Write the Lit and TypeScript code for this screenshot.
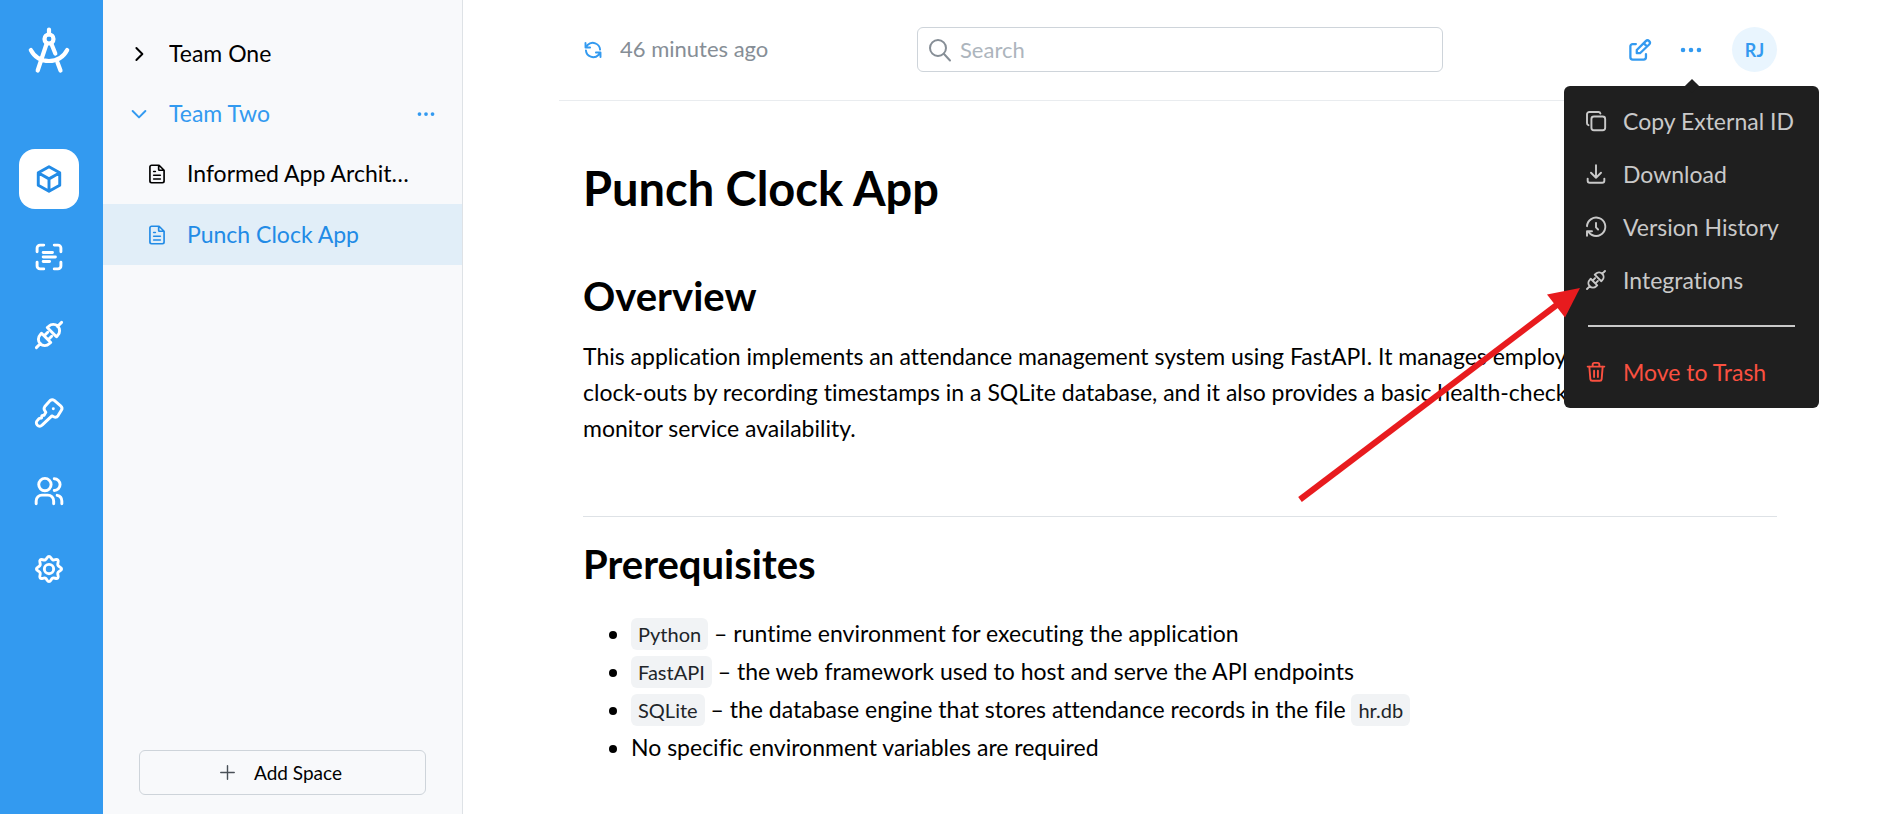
import { LitElement, html, css, svg, TemplateResult, SVGTemplateResult } from "lit";
import { customElement, property } from "lit/decorators.js";

/* Stroke icons on a 24-unit grid. */
const icons: Record<string, SVGTemplateResult> = {
  cube: svg`<path d="M12 1.500l9.200 5.200v10.600L12 22.500l-9.200-5.200V6.700zM12 11.900l9.200-5.200M12 11.900v10.600M12 11.900L2.800 6.700"/>`,
  scan: svg`<path d="M1.800 7.500V4.300a2.500 2.500 0 0 1 2.500-2.500h3.200M16.500 1.800h3.200a2.500 2.500 0 0 1 2.500 2.500v3.200M22.200 16.500v3.200a2.500 2.500 0 0 1-2.500 2.500h-3.200M7.500 22.200H4.300a2.500 2.500 0 0 1-2.500-2.500v-3.200M7 8.200h8M7 12h10.500M7 15.800h5.500"/>`,
  plug: svg`<path d="M1.200 22.800l3.500-3.500M22.800 1.200l-3.500 3.500M5.600 10.500l7.900 7.900-1.300 1.100a5 5 0 0 1-7.700-7.700zM18.400 13.500l-7.900-7.900 1.300-1.100a5 5 0 0 1 7.700 7.700zM7.900 12.700l3-3M11.300 16.100l3-3"/>`,
  key: svg`<path d="M13 1.300a3 3 0 0 1 3.500-.1l5.500 4.600a3 3 0 0 1 .6 3.900l-2.800 4.500a3 3 0 0 1-3.800 1l-1.500-.7-8.200 7.700a2.800 2.800 0 0 1-4.300.2 2.800 2.800 0 0 1 0-4l1.700-1.800 1.900-.3.300-2 1.900-.4 1.500-2.500-1-1.500a3 3 0 0 1 .1-3.400z"/><path d="M15.700 8.300v.01"/>`,
  users: svg`<circle cx="8.500" cy="6.500" r="5.300"/><path d="M1 23v-2.500a5 5 0 0 1 5-5h5a5 5 0 0 1 5 5V23M16.500 1.500a5 5 0 0 1 0 10M19 15.700a5 5 0 0 1 4 4.800V23"/>`,
  gear: svg`<path d="M12 1.200c1.600 0 1.700 2.300 3.200 2.900s3.300-1 4.400.2-.6 2.900 0 4.400 3.200 1.700 3.200 3.300-2.600 1.800-3.200 3.300 1.100 3.300 0 4.400-2.900-.4-4.400.2-1.600 2.900-3.200 2.900-1.700-2.300-3.200-2.900-3.300 1-4.400-.2.600-2.900 0-4.400-3.200-1.700-3.200-3.300 2.600-1.800 3.200-3.300-1.100-3.300 0-4.400 2.900.4 4.400-.2 1.600-2.900 3.200-2.900z"/><circle cx="12" cy="12" r="4"/>`,
  right: svg`<path d="M8.500 4l8 8-8 8"/>`,
  down: svg`<path d="M3.500 8L12 16.500 20.500 8"/>`,
  doc: svg`<path d="M14 2v4.500a1 1 0 0 0 1 1h5.500M5.500 22.500a2 2 0 0 1-2-2v-17a2 2 0 0 1 2-2H14.500l6 6v13a2 2 0 0 1-2 2zM8 9h2M8 13.500h8M8 18h8"/>`,
  dots: svg`<path class="fill" d="M.8 12a2.500 2.500 0 1 0 5 0 2.500 2.500 0 1 0-5 0M9.500 12a2.500 2.500 0 1 0 5 0 2.500 2.500 0 1 0-5 0M18.200 12a2.500 2.500 0 1 0 5 0 2.500 2.500 0 1 0-5 0"/>`,
  plus: svg`<path d="M12 2.500v19M2.500 12h19"/>`,
  sync: svg`<path d="M20.500 11.500A8.800 8.800 0 0 0 5.500 6L3.500 8.500M3 3.500v5.500h5.500M3.500 12.500A8.800 8.800 0 0 0 18.500 18l2-2.500M21 20.500V15h-5.500"/>`,
  search: svg`<circle cx="10" cy="10" r="8"/><path d="M15.800 15.800l6.200 6.700"/>`,
  edit: svg`<path d="M7.500 5.500H4A2.500 2.500 0 0 0 1.500 8v12A2.500 2.500 0 0 0 4 22.500h12a2.500 2.500 0 0 0 2.500-2.500v-3.500M8.500 12v3.500H12L22 6a2.500 2.500 0 0 0-3.700-3.700zM16 4.500l3.500 3.500"/>`,
  copy: svg`<rect x="6.500" y="6.500" width="16.500" height="16.500" rx="3"/><path d="M3 17A2.500 2.500 0 0 1 1.200 14.500V4A2.800 2.800 0 0 1 4 1.200h11A2.500 2.500 0 0 1 17.300 3"/>`,
  download: svg`<path d="M2 17.500V20a2.500 2.500 0 0 0 2.500 2.500h15A2.500 2.500 0 0 0 22 20v-2.500M6 10.500l6 6 6-6M12 1.500v15"/>`,
  history: svg`<path d="M12 7v5.500l2.500 2.500M1.200 11A11 11 0 1 1 3.500 18.500M1.200 22.500v-5.500h6"/>`,
  trash: svg`<path d="M2 5.500h20M4 5.500l1.200 15a2.200 2.200 0 0 0 2.200 2h9.200a2.200 2.200 0 0 0 2.200-2l1.200-15M8 5.500V3a2 2 0 0 1 2-2h4a2 2 0 0 1 2 2v2.500M9.700 10.500v7.500M14.300 10.500v7.500"/>`,
};

@customElement("ui-icon")
class UiIcon extends LitElement {
  @property() name = "";
  @property({ type: Number }) weight = 2;

  static styles = css`
    :host { display: inline-flex; flex: none; width: 24px; height: 24px; }
    svg { width: 100%; height: 100%; overflow: visible; fill: none; stroke: currentColor; stroke-linecap: round; stroke-linejoin: round; }
    .fill { fill: currentColor; stroke: none; }
  `;

  render(): TemplateResult {
    return html`<svg viewBox="0 0 24 24" stroke-width=${this.weight} aria-hidden="true">${icons[this.name]}</svg>`;
  }
}

const railLinks = [
  { icon: "cube", label: "Spaces" },
  { icon: "scan", label: "Scans" },
  { icon: "plug", label: "Integrations" },
  { icon: "key", label: "Keys" },
  { icon: "users", label: "Members" },
  { icon: "gear", label: "Settings" },
];

const menuItems = [
  { icon: "copy", label: "Copy External ID" },
  { icon: "download", label: "Download" },
  { icon: "history", label: "Version History" },
  { icon: "plug", label: "Integrations" },
];

@customElement("app-root")
class AppRoot extends LitElement {
  static styles = css`
    :host { display: flex; min-height: 100vh; font-family: Lato, "Noto Sans", sans-serif; font-size: 23px; line-height: 36px; font-variant-ligatures: none; color: #000; background: #fff; }
    * { box-sizing: border-box; }
    a { color: inherit; text-decoration: none; }
    button { font: inherit; color: inherit; background: none; border: 0; padding: 0; }

    .rail { flex: none; width: 103px; padding: 27px 5px 0 0; background: #339af0; color: #fff; display: flex; flex-direction: column; align-items: center; }
    .logo { width: 48px; height: 48px; margin-bottom: 74px; }
    .rail-nav { display: flex; flex-direction: column; gap: 18px; }
    .rail-link { width: 60px; height: 60px; border-radius: 16px; display: flex; align-items: center; justify-content: center; }
    .rail-link ui-icon { width: 28px; height: 28px; }
    .rail-link.active { background: #fff; color: #228be6; }

    .sidebar { flex: none; width: 360px; background: #f8f9fb; border-right: 1px solid #dee2e6; padding: 24px 0 19px; display: flex; flex-direction: column; }
    .tree { flex: 1; }
    .row { height: 60px; padding: 0 27px; display: flex; align-items: center; gap: 21px; }
    .row ui-icon { width: 18px; height: 18px; }
    .label { flex: 1; min-width: 0; padding-bottom: 2px; white-space: nowrap; overflow: hidden; text-overflow: ellipsis; }
    .row.open { color: #339af0; }
    .row.page { padding: 0 50px 0 44px; gap: 20px; }
    .row.page ui-icon { width: 20px; height: 20px; }
    .row.selected { background: #e1eef8; color: #228be6; height: 61px; }
    .row button { display: flex; }
    .add { margin: 0 36px; height: 45px; border: 1px solid #ced4da; border-radius: 6px; padding-right: 4px; display: flex; align-items: center; justify-content: center; gap: 18px; font-size: 19px; }
    .add ui-icon { width: 17px; height: 17px; color: #495057; }

    .main { flex: 1; min-width: 0; padding: 0 87px 0 96px; }
    .top { height: 101px; padding: 27px 24px 0; border-bottom: 1px solid #e9ecef; display: grid; grid-template-columns: 1fr 526px 1fr; align-items: start; }
    .sync { height: 45px; display: flex; align-items: center; gap: 17px; font-size: 22px; color: #868e96; }
    .sync ui-icon { width: 20px; height: 20px; color: #339af0; }
    .search { height: 45px; border: 1px solid #ced4da; border-radius: 6px; padding: 0 10px; display: flex; align-items: center; gap: 8px; font-size: 22px; color: #868e96; }
    .search input { flex: 1; min-width: 0; border: 0; outline: 0; padding: 0; background: none; font: inherit; color: #000; }
    .search input::placeholder { color: #adb5bd; opacity: 1; }
    .actions { height: 45px; display: flex; align-items: center; justify-content: flex-end; color: #339af0; }
    .edit { display: flex; margin-right: 29px; }
    .edit ui-icon { width: 22px; height: 22px; }
    .more { position: relative; margin-right: 30px; display: flex; }
    .more > button { display: flex; }
    .more > button ui-icon { width: 22px; height: 22px; }
    .avatar { width: 45px; height: 45px; border-radius: 50%; background: #e9f5fe; font-size: 18px; font-weight: 700; text-align: center; }

    .menu { position: absolute; z-index: 2; top: 47px; left: 50%; width: 255px; margin-left: -127px; padding: 9px 0; background: #1f1f1f; border-radius: 6px; color: #c9c9c9; }
    .menu::before { content: ""; position: absolute; left: 50%; top: -5px; width: 10px; height: 10px; margin-left: -5px; background: #1f1f1f; transform: rotate(45deg); }
    .item { width: 100%; height: 53px; padding: 0 22px; display: flex; align-items: center; gap: 17px; white-space: nowrap; }
    .item ui-icon { width: 20px; height: 20px; }
    .menu hr { height: 2px; margin: 18px 24px 19px; border: 0; background: #c9c9c9; }
    .item.danger { color: #fa5040; }
    .pointer { position: absolute; left: -268px; top: 198px; width: 288px; height: 220px; pointer-events: none; }

    .doc { padding: 0 24px 40px; }
    h1, h2, p, ul { margin: 0; }
    h1 { padding-top: 57px; font-size: 47px; line-height: 60px; }
    h2 { font-size: 40px; line-height: 50px; }
    h1 + h2 { margin-top: 53px; }
    .doc p { margin-top: 17px; }
    .doc hr { margin: 70px 0 22px; border: 0; border-top: 1px solid #dee2e6; }
    .doc ul { margin-top: 25px; padding-left: 48px; }
    .doc li { line-height: 38px; }
    code { font-family: inherit; font-size: 20px; line-height: 1; color: #212529; background: #f1f3f5; border-radius: 6px; padding: 4px 7px; }
  `;

  render(): TemplateResult {
    return html`
      <nav class="rail" aria-label="Sections">
        <svg class="logo" viewBox="0 0 48 48" fill="none" stroke="#fff" stroke-width="4.200" stroke-linecap="round" role="img" aria-label="Home">
          <path d="M24 2.500v5M21.500 17L12.700 43.500M26.500 17l3.800 9.500M32.500 35.500l3 8M5.800 23C10 31 16 34 24 34s14-3 18.200-11"/>
          <circle cx="24" cy="12" r="4.500"/>
        </svg>
        <div class="rail-nav">
          ${railLinks.map((l, i) => html`
            <a class="rail-link ${i === 0 ? "active" : ""}" href="#" aria-label=${l.label}>
              <ui-icon name=${l.icon} weight="2.500"></ui-icon>
            </a>`)}
        </div>
      </nav>

      <aside class="sidebar">
        <div class="tree">
          <a class="row" href="#"><ui-icon name="right" weight="2.600"></ui-icon><span class="label">Team One</span></a>
          <div class="row open">
            <ui-icon name="down" weight="2.600"></ui-icon><a class="label" href="#">Team Two</a>
            <button aria-label="Space actions"><ui-icon name="dots"></ui-icon></button>
          </div>
          <a class="row page" href="#"><ui-icon name="doc"></ui-icon><span class="label">Informed App Architecture</span></a>
          <a class="row page selected" href="#"><ui-icon name="doc"></ui-icon><span class="label">Punch Clock App</span></a>
        </div>
        <button class="add"><ui-icon name="plus"></ui-icon>Add Space</button>
      </aside>

      <main class="main">
        <header class="top">
          <div class="sync"><ui-icon name="sync" weight="2.300"></ui-icon><span class="label">46 minutes ago</span></div>
          <label class="search"><ui-icon name="search"></ui-icon><input type="text" placeholder="Search" aria-label="Search" /></label>
          <div class="actions">
            <button class="edit" aria-label="Edit"><ui-icon name="edit" weight="2.500"></ui-icon></button>
            <div class="more">
              <button aria-label="More"><ui-icon name="dots"></ui-icon></button>
              <div class="menu">
                ${menuItems.map((m) => html`<button class="item"><ui-icon name=${m.icon} weight="2.300"></ui-icon>${m.label}</button>`)}
                <hr />
                <button class="item danger"><ui-icon name="trash" weight="2.300"></ui-icon>Move to Trash</button>
                <svg class="pointer" viewBox="0 0 288 220" aria-hidden="true">
                  <path d="M4 215.500L262 20" stroke="#e81b1e" stroke-width="6"/>
                  <path d="M284 4L251 10.500 269 33.500z" fill="#e81b1e"/>
                </svg>
              </div>
            </div>
            <button class="avatar">RJ</button>
          </div>
        </header>
        <article class="doc">
          <h1>Punch Clock App</h1>
          <h2>Overview</h2>
          <p>
            This application implements an attendance management system using FastAPI. It manages employee clock-ins and<br />
            clock-outs by recording timestamps in a SQLite database, and it also provides a basic health-check endpoint to<br />
            monitor service availability.
          </p>
          <hr />
          <h2>Prerequisites</h2>
          <ul>
            <li><code>Python</code> – runtime environment for executing the application</li>
            <li><code>FastAPI</code> – the web framework used to host and serve the API endpoints</li>
            <li><code>SQLite</code> – the database engine that stores attendance records in the file <code>hr.db</code></li>
            <li>No specific environment variables are required</li>
          </ul>
        </article>
      </main>
    `;
  }
}
